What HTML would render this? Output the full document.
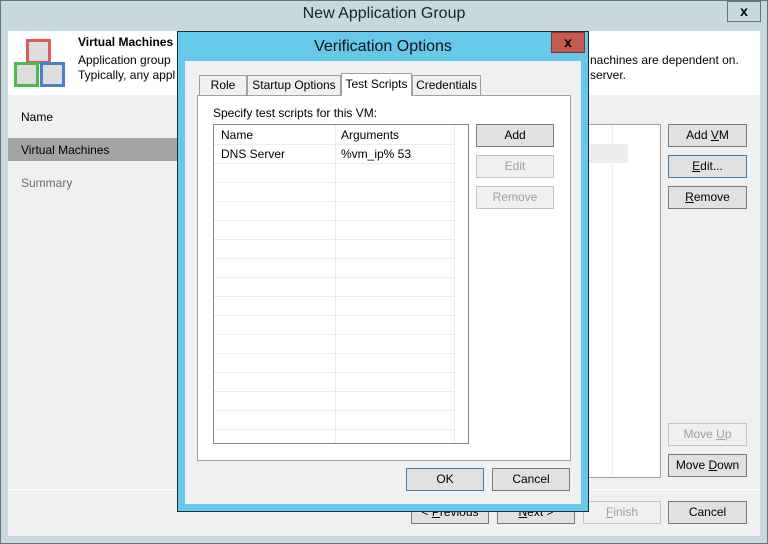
<!DOCTYPE html>
<html><head><style>
*{box-sizing:border-box;margin:0;padding:0}
body{width:768px;height:544px;position:relative;overflow:hidden;background:#c7d9de;font-family:"Liberation Sans",sans-serif;font-size:12px;color:#000}
.a{position:absolute}
.btn{position:absolute;background:#e1e1e1;border:1px solid #7a7a7a;text-align:center;line-height:20px;font-size:12px}
.dis{color:#a0a0a0;border-color:#c4c4c4;background:#f0f0f0}
.tab{position:absolute;background:#f0f0f0;border:1px solid #a0a0a0;border-bottom:none;text-align:center;line-height:19px;font-size:12px}
.hl{position:absolute;height:1px;background:#ececec}
.vl{position:absolute;width:1px;background:#ececec}
</style></head><body>
<div class="a" style="left:0;top:0;width:768px;height:544px;border:1px solid #6a7478"></div>
<div class="a" style="left:0;top:5px;width:768px;text-align:center;font-size:16px;color:#222">New Application Group</div>
<div class="a" style="left:727px;top:1px;width:34px;height:21px;border:1px solid #6a7478;text-align:center;font-weight:bold;font-size:14px;line-height:19px">x</div>
<div class="a" style="left:8px;top:31px;width:752px;height:505px;background:#f0f0f0"></div>
<div class="a" style="left:8px;top:31px;width:752px;height:64px;background:#fff"></div>
<svg class="a" style="left:14px;top:38px" width="54" height="50">
<rect x="13.5" y="2.5" width="22" height="22" fill="#ddd" stroke="#e05a5a" stroke-width="3"/>
<rect x="1.5" y="25.5" width="22" height="22" fill="#ddd" stroke="#4cba4c" stroke-width="3"/>
<rect x="27.5" y="25.5" width="22" height="22" fill="#ddd" stroke="#4a80c8" stroke-width="3"/>
</svg>
<div class="a" style="left:78px;top:35px;font-weight:bold">Virtual Machines</div>
<div class="a" style="left:78px;top:53px">Application group</div>
<div class="a" style="left:78px;top:68px">Typically, any appl</div>
<div class="a" style="left:590px;top:53px">nachines are dependent on.</div>
<div class="a" style="left:590px;top:68px">server.</div>
<div class="a" style="left:21px;top:110px">Name</div>
<div class="a" style="left:8px;top:138px;width:170px;height:23px;background:#a3a3a3"></div>
<div class="a" style="left:21px;top:143px">Virtual Machines</div>
<div class="a" style="left:21px;top:176px;color:#6d6d6d">Summary</div>
<div class="a" style="left:580px;top:124px;width:81px;height:354px;background:#fff;border:1px solid #a0a0a0"></div>
<div class="vl" style="left:612px;top:125px;height:352px"></div>
<div class="a" style="left:588px;top:144px;width:40px;height:19px;background:#ededed"></div>
<div class="btn" style="left:668px;top:124px;width:79px;height:23px">Add <u>V</u>M</div>
<div class="btn" style="left:668px;top:155px;width:79px;height:23px;border-color:#3c7fb1"><u>E</u>dit...</div>
<div class="btn" style="left:668px;top:186px;width:79px;height:23px"><u>R</u>emove</div>
<div class="btn dis" style="left:668px;top:423px;width:79px;height:23px">Move <u>U</u>p</div>
<div class="btn" style="left:668px;top:454px;width:79px;height:23px">Move <u>D</u>own</div>
<div class="a" style="left:8px;top:489px;width:752px;height:1px;background:#fff"></div>
<div class="btn" style="left:411px;top:501px;width:78px;height:23px">&lt; <u>P</u>revious</div>
<div class="btn" style="left:497px;top:501px;width:78px;height:23px"><u>N</u>ext &gt;</div>
<div class="btn dis" style="left:583px;top:501px;width:78px;height:23px"><u>F</u>inish</div>
<div class="btn" style="left:668px;top:501px;width:79px;height:23px">Cancel</div>

<div class="a" style="left:177px;top:31px;width:412px;height:481px;background:#66c9e9;border:1px solid #1f2d33"></div>
<div class="a" style="left:177px;top:38px;width:412px;text-align:center;font-size:16px;color:#111">Verification Options</div>
<div class="a" style="left:551px;top:32px;width:34px;height:21px;background:#c75b50;border:1px solid #7a3a33;text-align:center;font-weight:bold;font-size:14px;line-height:18px">x</div>
<div class="a" style="left:185px;top:61px;width:396px;height:443px;background:#f0f0f0"></div>
<div class="a" style="left:197px;top:95px;width:374px;height:366px;background:#fff;border:1px solid #a0a0a0"></div>
<div class="tab" style="left:199px;top:75px;width:48px;height:20px">Role</div>
<div class="tab" style="left:247px;top:75px;width:94px;height:20px">Startup Options</div>
<div class="tab" style="left:341px;top:73px;width:71px;height:23px;background:#fff;line-height:20px">Test Scripts</div>
<div class="tab" style="left:412px;top:75px;width:69px;height:20px">Credentials</div>
<div class="a" style="left:213px;top:106px">Specify test scripts for this VM:</div>
<div class="a" style="left:213px;top:124px;width:256px;height:320px;border:1px solid #828790;background:#fff"></div>
<div class="vl" style="left:335px;top:125px;height:318px"></div>
<div class="vl" style="left:454px;top:125px;height:318px"></div>
<div class="hl" style="left:214px;top:144px;width:240px"></div>
<div class="hl" style="left:214px;top:163px;width:240px"></div>
<div class="hl" style="left:214px;top:182px;width:240px"></div>
<div class="hl" style="left:214px;top:201px;width:240px"></div>
<div class="hl" style="left:214px;top:220px;width:240px"></div>
<div class="hl" style="left:214px;top:239px;width:240px"></div>
<div class="hl" style="left:214px;top:258px;width:240px"></div>
<div class="hl" style="left:214px;top:277px;width:240px"></div>
<div class="hl" style="left:214px;top:296px;width:240px"></div>
<div class="hl" style="left:214px;top:315px;width:240px"></div>
<div class="hl" style="left:214px;top:334px;width:240px"></div>
<div class="hl" style="left:214px;top:353px;width:240px"></div>
<div class="hl" style="left:214px;top:372px;width:240px"></div>
<div class="hl" style="left:214px;top:391px;width:240px"></div>
<div class="hl" style="left:214px;top:410px;width:240px"></div>
<div class="hl" style="left:214px;top:429px;width:240px"></div>
<div class="a" style="left:221px;top:128px">Name</div>
<div class="a" style="left:341px;top:128px">Arguments</div>
<div class="a" style="left:221px;top:147px">DNS Server</div>
<div class="a" style="left:341px;top:147px">%vm_ip% 53</div>
<div class="btn" style="left:476px;top:124px;width:78px;height:23px">Add</div>
<div class="btn dis" style="left:476px;top:155px;width:78px;height:23px">Edit</div>
<div class="btn dis" style="left:476px;top:186px;width:78px;height:23px">Remove</div>
<div class="btn" style="left:406px;top:468px;width:78px;height:23px;border-color:#3c7fb1">OK</div>
<div class="btn" style="left:492px;top:468px;width:78px;height:23px">Cancel</div>
</body></html>
